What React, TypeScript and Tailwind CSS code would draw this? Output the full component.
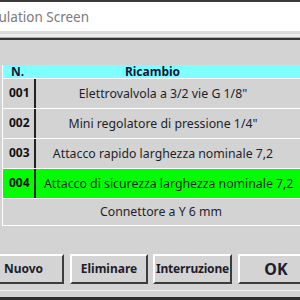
const rows = [
  { id: "001", name: 'Elettrovalvola a 3/2 vie G 1/8"' },
  { id: "002", name: "Mini regolatore di pressione 1/4\"" },
  { id: "003", name: "Attacco rapido larghezza nominale 7,2" },
  { id: "004", name: "Attacco di sicurezza larghezza nominale 7,2", active: true },
];

const Btn = ({ label, className = "" }: { label: string; className?: string }) => (
  <button
    className={`h-[30px] shrink-0 border-2 border-t-white border-l-white border-b-[#3c3c3c] border-r-[#3c3c3c] bg-[#d4d4d4] font-bold text-[12px] text-[#1d1d2b] whitespace-nowrap ${className}`}
  >
    {label}
  </button>
);

export default function App() {
  return (
    <div
      className="w-[300px] h-[300px] overflow-hidden bg-[#d3d3d3] flex flex-col"
      style={{ fontFamily: '"Noto Sans", sans-serif' }}
    >
      <div className="h-[31px] shrink-0 bg-white border-t-2 border-[#3a3a3a] overflow-hidden whitespace-nowrap">
        <span className="block ml-[-25px] pt-[6px] text-[13.5px] leading-[18px] text-[#7a7a7a]">Simulation Screen</span>
      </div>
      <div className="h-[3px] shrink-0 bg-[#dadada]" />
      <div className="h-[3px] shrink-0 bg-[#ececec]" />
      <div className="h-[1px] shrink-0 bg-[#b0b0b0]" />
      <div className="h-[2px] shrink-0 bg-[#333]" />

      <div className="flex-1 pt-[25px] pl-[2px]">
        <div className="w-[320px] border-l border-white">
          <div className="h-[13px] bg-[#80ffff] flex items-center text-[12px] font-bold text-[#10183a] leading-none">
            <span className="w-[33px] pl-[8px]">N.</span>
            <span className="w-[233px] text-center">Ricambio</span>
          </div>
          {rows.map((r) => (
            <div
              key={r.id}
              className={`h-[30px] border-t border-white flex ${r.active ? "bg-[#00ff00]" : "bg-[#d3d3d3]"}`}
            >
              <div className="w-[31px] pl-[6px] pt-[6px] text-[12px] font-bold text-[#111] leading-[15px]">{r.id}</div>
              <div className="w-[2px] bg-[#222]" />
              <div
                className={`w-[254px] flex items-center pt-[2px] text-[12.3px] text-[#1f1f2a] whitespace-nowrap ${
                  r.active ? "justify-start pl-[8px]" : "justify-center"
                }`}
              >
                {r.name}
              </div>
            </div>
          ))}
          <div className="h-[28px] border-t border-b border-white bg-[#d3d3d3] flex items-center">
            <span className="w-[316px] text-center text-[12.3px] text-[#1f1f2a]">Connettore a Y 6 mm</span>
          </div>
        </div>
      </div>

      <div className="flex gap-[5px] ml-[-17px] mb-[6px]">
        <Btn label="Nuovo" className="w-[81px]" />
        <Btn label="Eliminare" className="w-[78px] ml-[1px]" />
        <Btn label="Interruzione" className="w-[79px] tracking-[-0.2px]" />
        <Btn label="OK" className="w-[76px] ml-[1px] text-[16px]" />
      </div>
      <div className="h-[1px] shrink-0 bg-[#f2f2f2]" />
      <div className="h-[6px] shrink-0 bg-[#d3d3d3]" />
      <div className="h-[3px] shrink-0 bg-[#2e2e2e]" />
    </div>
  );
}
